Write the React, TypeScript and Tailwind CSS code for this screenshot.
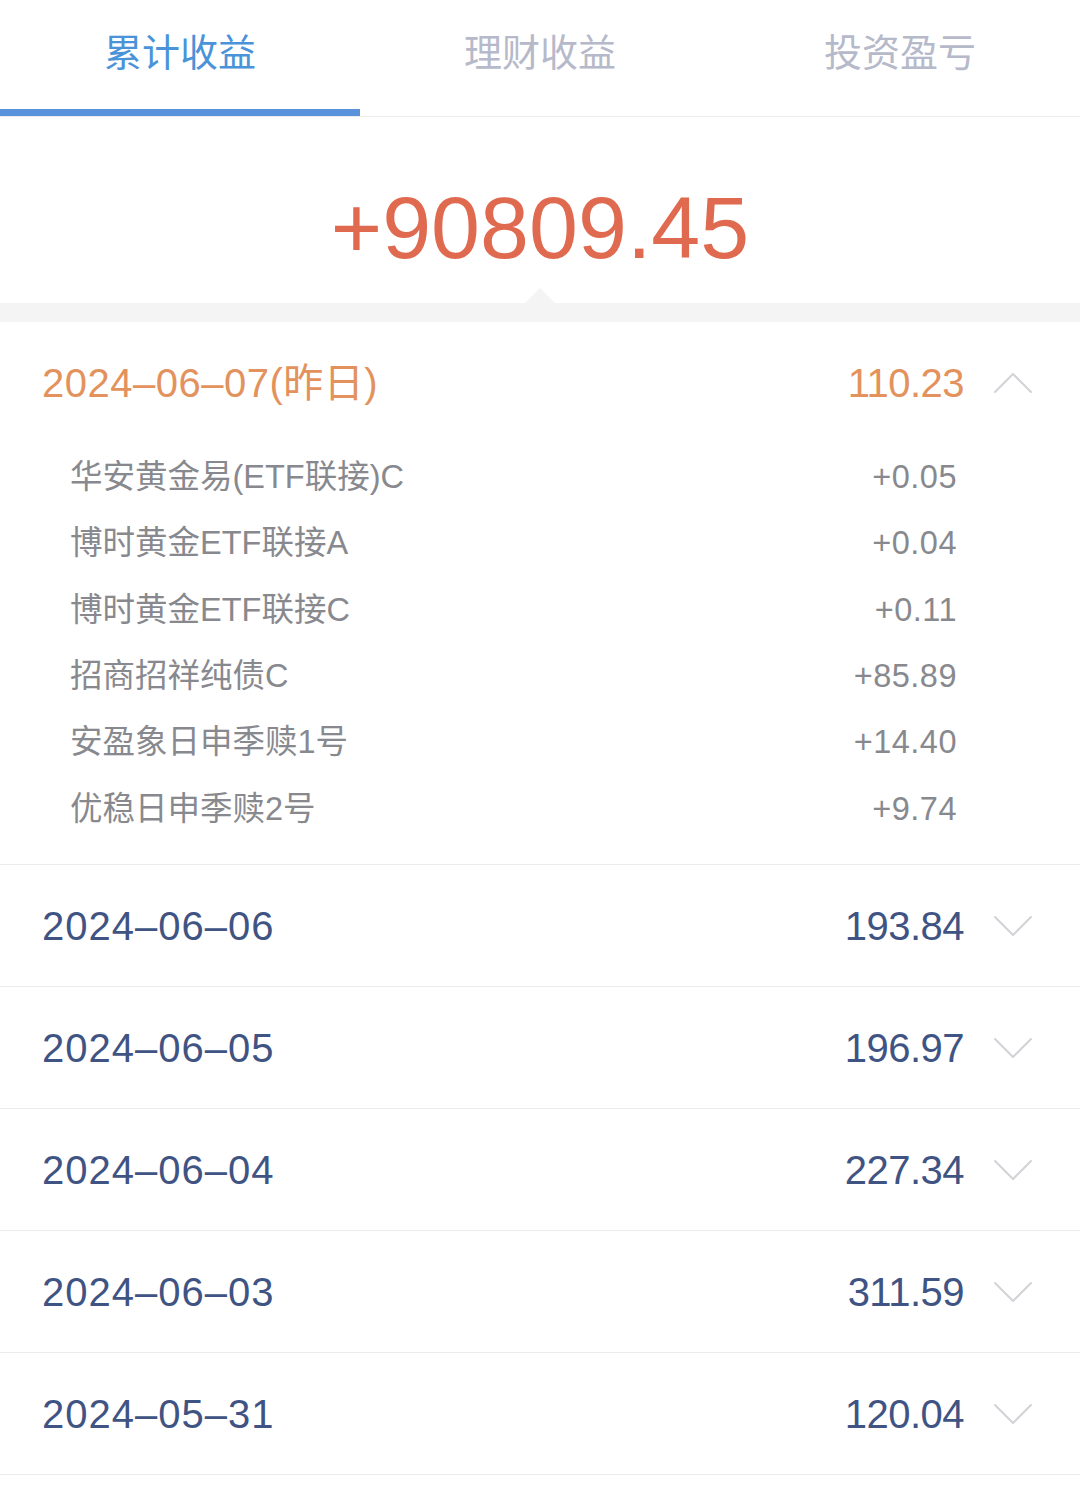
const FONT = {
  fontFamily:
    '"Liberation Sans", Arial, "Noto Sans CJK SC", sans-serif',
};

const tabs = ["累计收益", "理财收益", "投资盈亏"];

const items = [
  { name: "华安黄金易(ETF联接)C", value: "+0.05" },
  { name: "博时黄金ETF联接A", value: "+0.04" },
  { name: "博时黄金ETF联接C", value: "+0.11" },
  { name: "招商招祥纯债C", value: "+85.89" },
  { name: "安盈象日申季赎1号", value: "+14.40" },
  { name: "优稳日申季赎2号", value: "+9.74" },
];

const days = [
  { date: "2024–06–06", value: "193.84" },
  { date: "2024–06–05", value: "196.97" },
  { date: "2024–06–04", value: "227.34" },
  { date: "2024–06–03", value: "311.59" },
  { date: "2024–05–31", value: "120.04" },
];

const Chevron = ({ up }: { up?: boolean }) => (
  <svg
    width="38"
    height="22"
    viewBox="0 0 38 22"
    fill="none"
    className="ml-[30px] shrink-0"
  >
    <polyline
      points={up ? "1,20 19,2 37,20" : "1,2 19,20 37,2"}
      stroke="#d2d3d7"
      strokeWidth="2"
      strokeLinecap="round"
      strokeLinejoin="round"
    />
  </svg>
);

export default function App() {
  return (
    <div className="w-[1080px] min-h-[1492px] bg-white" style={FONT}>
      {/* tabs */}
      <div className="flex h-[117px] border-b border-[#ececec]">
        {tabs.map((t, i) => (
          <div key={t} className="flex-1 flex flex-col items-center relative">
            <div
              className={
                i === 0
                  ? "pt-[30px] text-[38px] leading-[46px] text-[#4a93d8]"
                  : "pt-[30px] text-[38px] leading-[46px] text-[#b6b9c9]"
              }
            >
              {t}
            </div>
            {i === 0 && (
              <div className="absolute left-0 right-0 bottom-0 h-[7px] bg-[#5b92dc]" />
            )}
          </div>
        ))}
      </div>

      {/* total */}
      <div className="h-[186px] flex items-center justify-center relative">
        <div className="text-[88px] leading-none text-[#e06a4f] pt-[36px]">
          +90809.45
        </div>
        <div className="absolute bottom-0 left-[525px] w-0 h-0 border-l-[15px] border-r-[15px] border-b-[15px] border-l-transparent border-r-transparent border-b-[#f4f4f5]" />
      </div>
      <div className="h-[19px] bg-[#f4f4f5]" />

      {/* expanded day */}
      <div className="border-b border-[#ebebeb]">
        <div className="h-[122px] flex items-center pl-[42px] pr-[48px]">
          <div className="flex-1 text-[40px] tracking-[0.5px] text-[#e3925d]">
            2024–06–07(昨日)
          </div>
          <div className="text-[40px] tracking-[-0.5px] text-[#e3925d]">
            110.23
          </div>
          <Chevron up />
        </div>
        <div className="pl-[70px] pr-[123px] pb-[22px]">
          {items.map((it) => (
            <div
              key={it.name}
              className="h-[66.4px] flex items-center justify-between text-[32.5px] text-[#88898e]"
            >
              <span>{it.name}</span>
              <span className="tracking-[0.5px]">{it.value}</span>
            </div>
          ))}
        </div>
      </div>

      {/* collapsed days */}
      {days.map((d) => (
        <div
          key={d.date}
          className="h-[122px] flex items-center pl-[42px] pr-[48px] border-b border-[#ebebeb]"
        >
          <div className="flex-1 text-[40px] tracking-[1px] text-[#3f5483]">
            {d.date}
          </div>
          <div className="text-[40px] tracking-[-0.5px] text-[#3f5483]">
            {d.value}
          </div>
          <Chevron />
        </div>
      ))}
    </div>
  );
}
